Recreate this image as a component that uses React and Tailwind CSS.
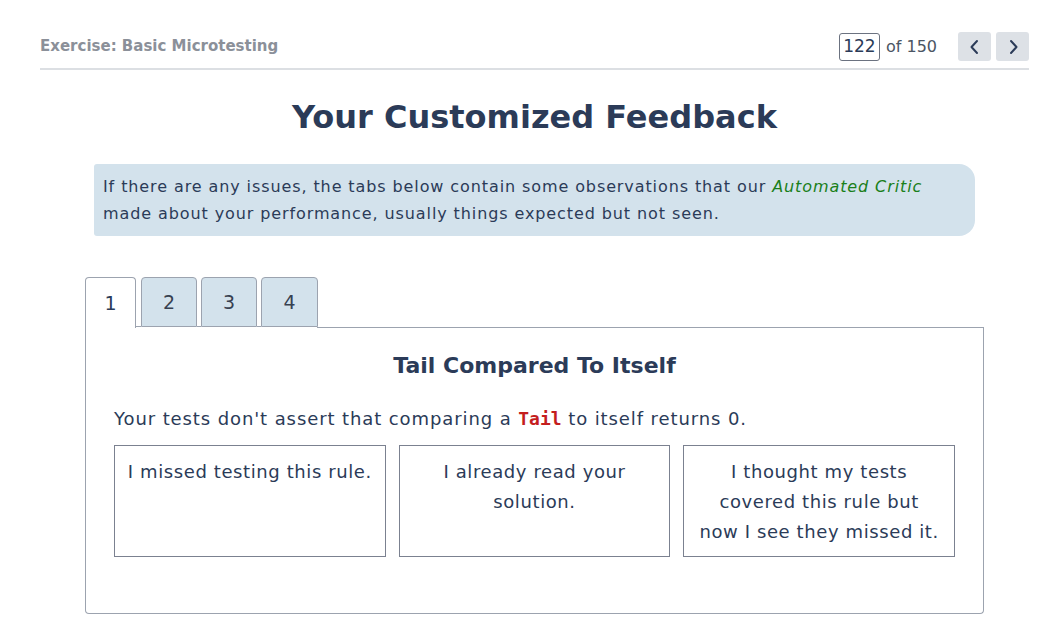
import React from "react";

export default function App() {
  const navy = "text-[#2b3b58]";
  return (
    <div className="w-[1054px] h-[643px] bg-white overflow-hidden" style={{ fontFamily: "'DejaVu Sans', 'Noto Sans', sans-serif" }}>
      <div className="mx-[40px] w-[989px]">
        {/* Header */}
        <div className="flex items-end justify-between h-[70px] border-b-2 border-[#dcdfe3] pb-[7px]">
          <div className="text-[15px] font-semibold text-[#8b9099] mb-[4px]">Exercise: Basic Microtesting</div>
          <div className="flex items-center">
            <div className="w-[41px] h-[28px] border border-[#6b7280] rounded-[3px] flex items-center justify-center text-[17px] text-[#2b3b58]">122</div>
            <span className="ml-[6px] text-[16px] text-[#4b5563]">of 150</span>
            <button className="ml-[21px] w-[33px] h-[29px] bg-[#dde1e6] rounded-[3px] flex items-center justify-center">
              <svg width="14" height="16" viewBox="0 0 14 16" fill="none" stroke="#2b3b58" strokeWidth="2" strokeLinecap="round" strokeLinejoin="round"><path d="M9 2 L3.5 8 L9 14" /></svg>
            </button>
            <button className="ml-[5px] w-[33px] h-[29px] bg-[#dde1e6] rounded-[3px] flex items-center justify-center">
              <svg width="14" height="16" viewBox="0 0 14 16" fill="none" stroke="#2b3b58" strokeWidth="2" strokeLinecap="round" strokeLinejoin="round"><path d="M5 2 L10.5 8 L5 14" /></svg>
            </button>
          </div>
        </div>

        {/* Title */}
        <h1 className={`text-center text-[32px] font-bold ${navy} mt-[25px] leading-[44px]`}>Your Customized Feedback</h1>

        {/* Info box */}
        <div className={`ml-[54px] w-[881px] mt-[25px] bg-[#d3e2ec] rounded-r-[16px] rounded-l-[3px] pl-[9px] pr-[10px] pt-[9px] pb-[9px] text-[16px] tracking-[0.9px] leading-[27px] ${navy}`}>
          If there are any issues, the tabs below contain some observations that our{" "}
          <em className="text-[#1a7f1a]">Automated Critic</em>
          <br />
          made about your performance, usually things expected but not seen.
        </div>

        {/* Tabs */}
        <div className="ml-[45px] w-[899px] mt-[40px]">
          <div className="flex items-end h-[51px]">
            <div className={`w-[51px] h-[51px] bg-white border border-[#9ca3af] border-b-0 rounded-t-[4px] flex items-center justify-center text-[19px] ${navy} relative z-10 -mb-px`}>1</div>
            <div className="w-[5px] h-[1px] bg-[#9ca3af]" />
            <div className={`w-[56px] h-[50px] bg-[#d3e2ec] border border-[#9ca3af] rounded-t-[4px] flex items-center justify-center text-[19px] text-[#374151]`}>2</div>
            <div className="w-[4px] h-[1px] bg-[#9ca3af]" />
            <div className={`w-[56px] h-[50px] bg-[#d3e2ec] border border-[#9ca3af] rounded-t-[4px] flex items-center justify-center text-[19px] text-[#374151]`}>3</div>
            <div className="w-[4px] h-[1px] bg-[#9ca3af]" />
            <div className={`w-[57px] h-[50px] bg-[#d3e2ec] border border-[#9ca3af] rounded-t-[4px] flex items-center justify-center text-[19px] text-[#374151]`}>4</div>
          </div>
          <div className="border border-[#9ca3af] border-t-0 rounded-b-[4px] h-[287px] px-[28px] pt-[24px] relative">
            <div className="absolute top-0 left-[231px] right-0 h-px bg-[#9ca3af]" />
            <h2 className={`text-center text-[22px] font-bold ${navy} leading-[30px]`}>Tail Compared To Itself</h2>
            <p className={`mt-[24px] text-[18px] tracking-[0.9px] leading-[27px] ${navy}`}>
              Your tests don't assert that comparing a{" "}
              <code className="text-[#c41e1e] font-bold tracking-normal" style={{ fontFamily: "'DejaVu Sans Mono', monospace" }}>Tail</code>{" "}
              to itself returns 0.
            </p>
            <div className="grid grid-cols-3 gap-[13px] mt-[13px]">
              {[
                ["I missed testing this rule."],
                ["I already read your", "solution."],
                ["I thought my tests", "covered this rule but", "now I see they missed it."],
              ].map((lines, i) => (
                <div key={i} className={`h-[112px] border border-[#7b8190] pt-[11px] text-center text-[18px] tracking-[0.6px] leading-[30px] whitespace-nowrap ${navy}`}>
                  {lines.map((l, j) => (
                    <div key={j}>{l}</div>
                  ))}
                </div>
              ))}
            </div>
          </div>
        </div>
      </div>
    </div>
  );
}
